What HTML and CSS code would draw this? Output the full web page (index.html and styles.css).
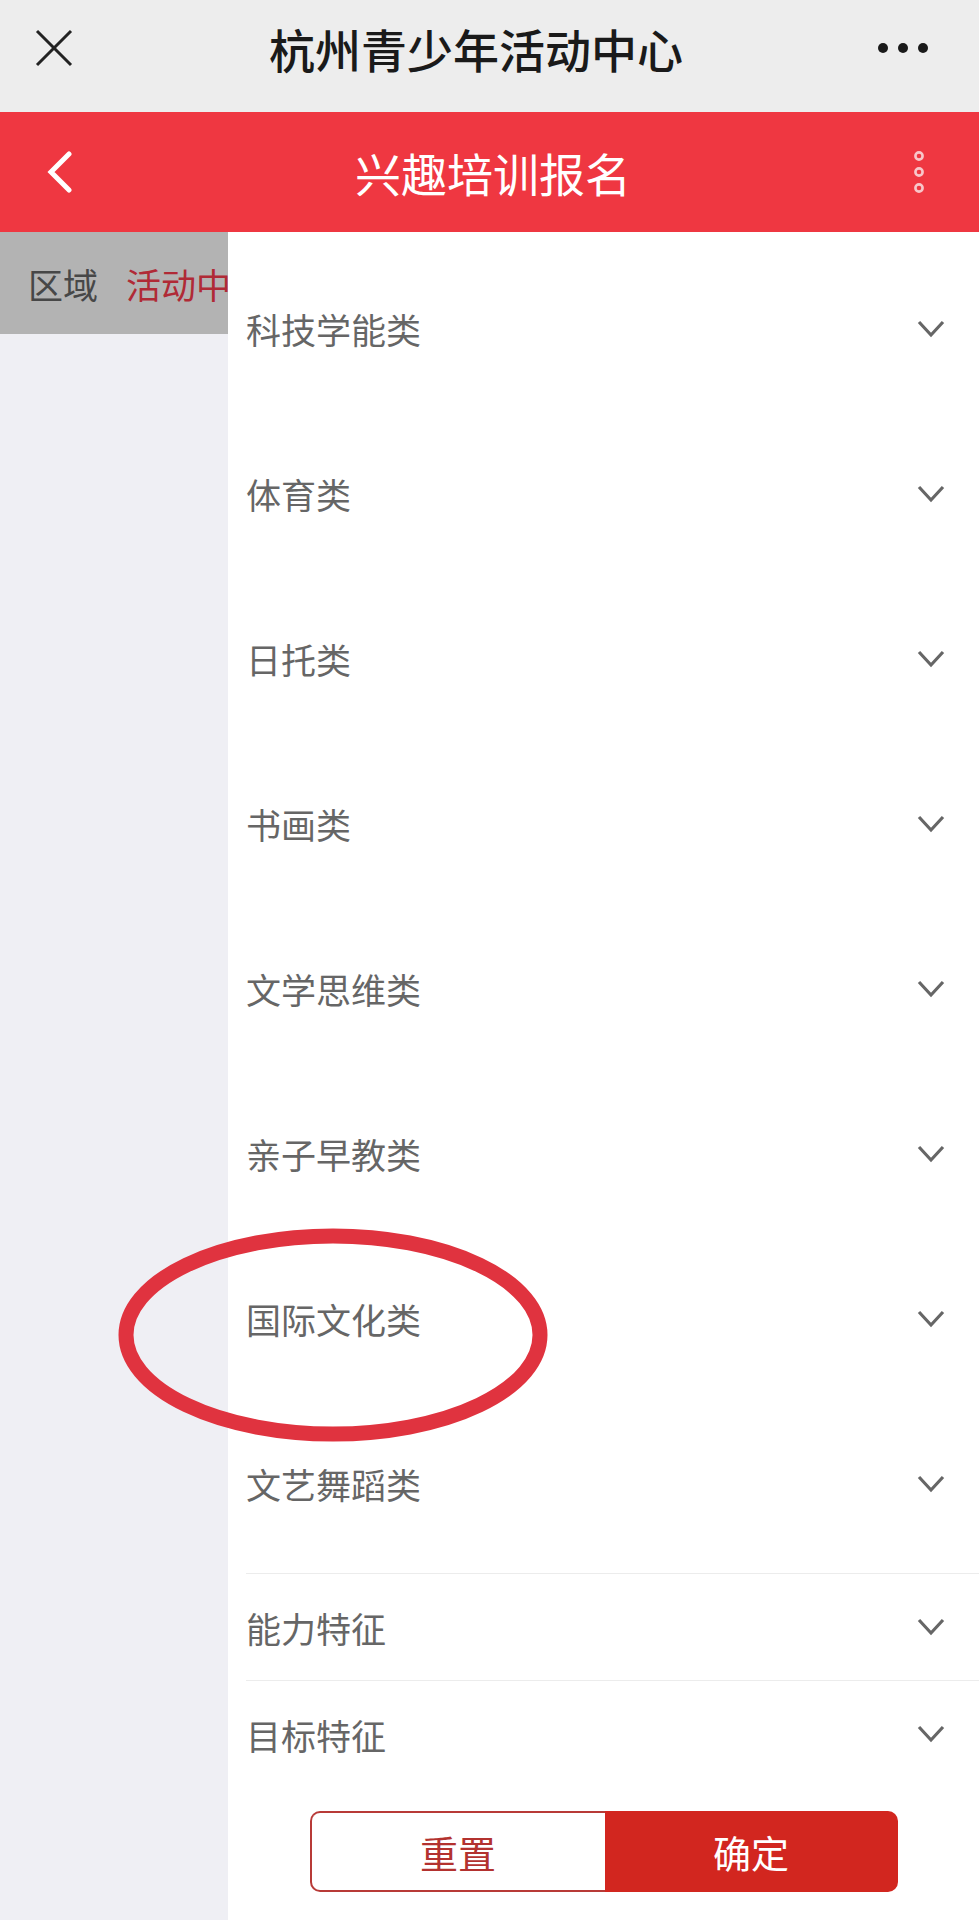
FILE: index.html
```html
<!DOCTYPE html>
<html lang="zh-CN">

<head>
    <meta charset="UTF-8">
    <meta name="viewport" content="width=device-width, initial-scale=1.0">
    <title>兴趣培训报名</title>
    <link rel="stylesheet" href="styles.css">
</head>

<body>
    <header class="topbar">
        <svg class="close-icon" width="40" height="40" viewBox="0 0 40 40">
            <line x1="3" y1="3" x2="37" y2="37" />
            <line x1="37" y1="3" x2="3" y2="37" />
        </svg>
        <h1>杭州青少年活动中心</h1>
        <div class="more">
            <span></span><span></span><span></span>
        </div>
    </header>

    <nav class="redbar">
        <svg class="back-icon" width="26" height="42" viewBox="0 0 26 42">
            <polyline points="22,3 4,21 22,39" />
        </svg>
        <h2>兴趣培训报名</h2>
        <svg class="menu-icon" width="12" height="46" viewBox="0 0 12 46">
            <circle cx="6" cy="7" r="3.6" />
            <circle cx="6" cy="23" r="3.6" />
            <circle cx="6" cy="39" r="3.6" />
        </svg>
    </nav>

    <main class="filter">
        <aside class="sidebar">
            <div class="tab">
                <span class="tab-label">区域</span>
                <span class="tab-value">活动中心</span>
            </div>
        </aside>

        <section class="panel">
            <div class="categories">
                <div class="row"><span>科技学能类</span><svg class="chevron" width="28" height="18" viewBox="0 0 28 18"><polyline points="2,2 14,15 26,2" /></svg></div>
                <div class="row"><span>体育类</span><svg class="chevron" width="28" height="18" viewBox="0 0 28 18"><polyline points="2,2 14,15 26,2" /></svg></div>
                <div class="row"><span>日托类</span><svg class="chevron" width="28" height="18" viewBox="0 0 28 18"><polyline points="2,2 14,15 26,2" /></svg></div>
                <div class="row"><span>书画类</span><svg class="chevron" width="28" height="18" viewBox="0 0 28 18"><polyline points="2,2 14,15 26,2" /></svg></div>
                <div class="row"><span>文学思维类</span><svg class="chevron" width="28" height="18" viewBox="0 0 28 18"><polyline points="2,2 14,15 26,2" /></svg></div>
                <div class="row"><span>亲子早教类</span><svg class="chevron" width="28" height="18" viewBox="0 0 28 18"><polyline points="2,2 14,15 26,2" /></svg></div>
                <div class="row"><span>国际文化类</span><svg class="chevron" width="28" height="18" viewBox="0 0 28 18"><polyline points="2,2 14,15 26,2" /></svg></div>
                <div class="row"><span>文艺舞蹈类</span><svg class="chevron" width="28" height="18" viewBox="0 0 28 18"><polyline points="2,2 14,15 26,2" /></svg></div>
            </div>

            <div class="row feature"><span>能力特征</span><svg class="chevron" width="28" height="18" viewBox="0 0 28 18"><polyline points="2,2 14,15 26,2" /></svg></div>
            <div class="row feature"><span>目标特征</span><svg class="chevron" width="28" height="18" viewBox="0 0 28 18"><polyline points="2,2 14,15 26,2" /></svg></div>

            <div class="actions">
                <button class="btn-reset">重置</button>
                <button class="btn-confirm">确定</button>
            </div>
        </section>
    </main>

    <!-- hand-drawn highlight over 国际文化类 -->
    <svg class="mark" width="460" height="230" viewBox="0 0 460 230">
        <ellipse cx="223" cy="115" rx="207" ry="99" />
    </svg>
</body>

</html>
```

FILE: styles.css
```css
body {
    margin: 0;
    font-family: "Noto Sans CJK SC", "Noto Sans", sans-serif;
    background-color: #fff;
    position: relative;
}

.topbar {
    height: 112px;
    box-sizing: border-box;
    padding: 0 51px 16px 34px;
    background-color: #ededed;
    display: flex;
    align-items: center;
    justify-content: space-between;
}

.topbar h1 {
    margin: 0;
    font-size: 46px;
    font-weight: 500;
    color: #1a1a1a;
    line-height: 1;
}

.close-icon line {
    stroke: #222;
    stroke-width: 3;
}

.more {
    display: flex;
    gap: 10px;
}

.more span {
    width: 10px;
    height: 10px;
    border-radius: 50%;
    background-color: #1a1a1a;
}

.redbar {
    height: 120px;
    box-sizing: border-box;
    padding: 0 54px 0 47px;
    background-color: #ef3741;
    display: flex;
    align-items: center;
    justify-content: space-between;
}

.redbar h2 {
    margin: 0;
    font-size: 46px;
    font-weight: 400;
    color: #fff;
    line-height: 1;
}

.back-icon polyline {
    fill: none;
    stroke: #fff;
    stroke-width: 5;
    stroke-linecap: round;
}

.menu-icon circle {
    fill: none;
    stroke: #f8c6c9;
    stroke-width: 2.6;
}

.filter {
    display: flex;
    min-height: calc(100vh - 232px);
}

.sidebar {
    width: 228px;
    flex-shrink: 0;
    background-color: #efeff4;
}

.tab {
    height: 102px;
    padding-left: 28px;
    background-color: #b3b3b3;
    display: flex;
    align-items: center;
    gap: 28px;
    overflow: hidden;
    white-space: nowrap;
    font-size: 35px;
}

.tab-label {
    color: #474747;
}

.tab-value {
    color: #b02a36;
}

.panel {
    flex: 1;
    background-color: #fff;
}

.categories {
    padding: 14px 0 7px;
}

.row {
    height: 165px;
    margin-left: 18px;
    padding-right: 34px;
    display: flex;
    align-items: center;
    justify-content: space-between;
    font-size: 35px;
    color: #666;
}

.row.feature {
    height: 106px;
    border-top: 1px solid #ececec;
}

.chevron polyline {
    fill: none;
    stroke: #666;
    stroke-width: 3.2;
}

.actions {
    width: 588px;
    height: 81px;
    margin: 24px auto 0;
    display: flex;
}

.actions button {
    flex: 1;
    font-family: inherit;
    font-size: 38px;
    cursor: pointer;
}

.btn-reset {
    background-color: #fff;
    color: #b3322f;
    border: 2px solid #b83a37;
    border-right: none;
    border-radius: 10px 0 0 10px;
}

.btn-confirm {
    background-color: #d2261f;
    color: #fff;
    border: none;
    border-radius: 0 10px 10px 0;
}

.mark {
    position: absolute;
    left: 110px;
    top: 1220px;
}

.mark ellipse {
    fill: none;
    stroke: #e0333f;
    stroke-width: 15;
}
```
